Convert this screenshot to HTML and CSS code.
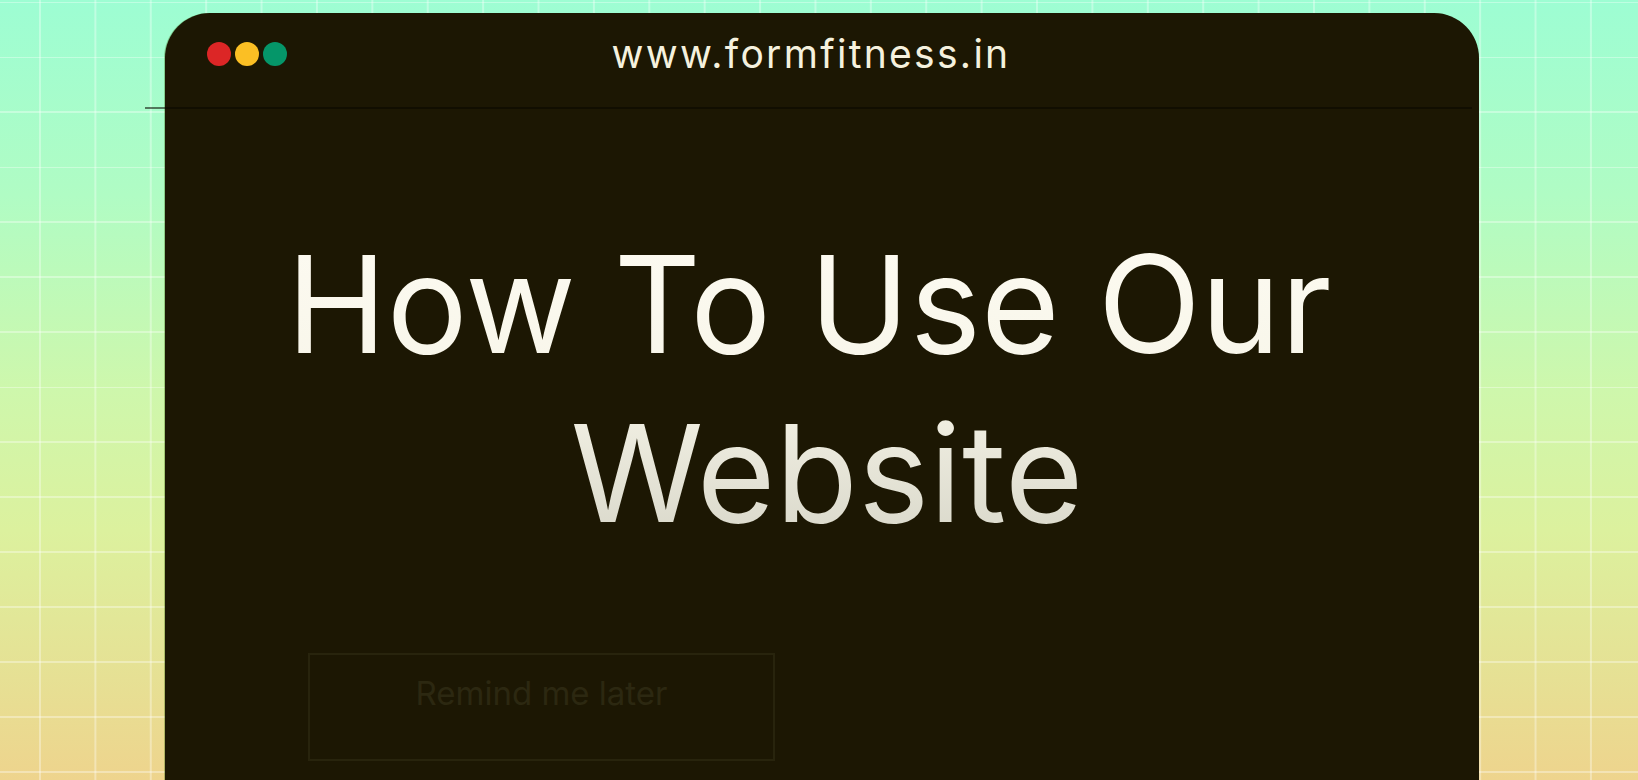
FILE: index.html
```html
<!DOCTYPE html>
<html lang="en">
<head>
<meta charset="utf-8">
<title>How To Use Our Website</title>
<link rel="stylesheet" href="styles.css">
</head>
<body>
<div class="stage">
  <div class="rule"></div>
  <div class="window">
    <header class="titlebar">
      <div class="dots">
        <span class="dot red"></span>
        <span class="dot yellow"></span>
        <span class="dot green"></span>
      </div>
      <div class="url">www.formfitness.in</div>
      <div></div>
    </header>
    <main class="content">
      <h1 class="headline"><span class="line line-1">How To Use Our</span><span class="line line-2">Website</span></h1>
      <div class="actions">
        <button class="btn-ghost">Remind me later</button>
      </div>
    </main>
  </div>
</div>
</body>
</html>
```

FILE: styles.css
```css
* { box-sizing: border-box; }
html, body { margin: 0; padding: 0; }
body {
  width: 1638px;
  height: 780px;
  overflow: hidden;
  font-family: Inter, "Liberation Sans", sans-serif;
}
.stage {
  position: relative;
  width: 1638px;
  height: 780px;
  padding: 13px 0 0 165px;
  background-color: #c8f7b0;
  background-image:
    linear-gradient(to right, rgba(255,255,255,0.34) 0 2px, transparent 2px),
    linear-gradient(to bottom, rgba(255,255,255,0.34) 0 2px, transparent 2px),
    linear-gradient(to bottom, #9dfdd3 0%, #b0fcc4 25%, #cef7ac 50%, #dcf19e 68%, #e5e295 85%, #eed48d 100%);
  background-size: 55.4px 55px, 55.4px 55px, 100% 100%;
  background-position: 39px 1px, 39px 1px, 0 0;
}
.rule {
  position: absolute;
  left: 145px;
  top: 107px;
  width: 1327px;
  height: 2px;
  background: rgba(10, 8, 0, 0.55);
  z-index: 2;
}
.window {
  width: 1314px;
  height: 800px;
  background: #1c1703;
  border-radius: 45px 45px 0 0;
  box-shadow: -1px 0 0 rgba(60, 110, 20, 0.35);
}
.titlebar {
  height: 95px;
  display: grid;
  grid-template-columns: 1fr auto 1fr;
  align-items: center;
  padding: 0 64px 14px 42px;
}
.dots { display: flex; gap: 4px; }
.dot {
  width: 24px;
  height: 24px;
  border-radius: 50%;
}
.red { background: #dc2626; }
.yellow { background: #fbbf24; }
.green { background: #059669; }
.url {
  color: #f5f1de;
  font-size: 39px;
  letter-spacing: 2.3px;
  line-height: 1;
}
.content {
  padding-top: 112px;
  display: flex;
  flex-direction: column;
  align-items: center;
}
.headline {
  margin: 0;
  font-weight: 400;
  font-size: 135px;
  line-height: 169px;
  text-align: center;
  background: linear-gradient(to bottom, #fdfbf2 0%, #f8f6ea 45%, #d6d5c7 100%);
  -webkit-background-clip: text;
  background-clip: text;
  color: transparent;
}
.line { display: block; }
.line-1 { padding-right: 26px; }
.line-2 { padding-left: 10px; }
.actions {
  align-self: stretch;
  margin-top: 95px;
  padding-left: 143px;
  display: flex;
}
.btn-ghost {
  width: 467px;
  height: 108px;
  background: transparent;
  border: 2px solid #28240d;
  color: #2c2811;
  font-family: Inter, "Liberation Sans", sans-serif;
  font-size: 33px;
  padding: 18px 0 0;
  display: flex;
  justify-content: center;
  align-items: flex-start;
}
```
